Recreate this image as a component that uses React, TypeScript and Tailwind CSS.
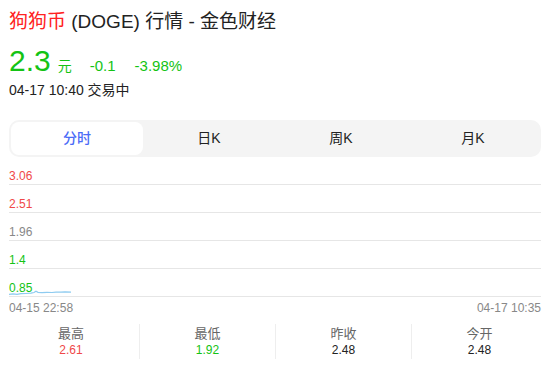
const font = { fontFamily: '"Liberation Sans", Arial, "Noto Sans CJK SC", sans-serif' };

const levels = [
  { v: "3.06", c: "text-[#f04848]" },
  { v: "2.51", c: "text-[#f04848]" },
  { v: "1.96", c: "text-[#888888]" },
  { v: "1.4", c: "text-[#14c314]" },
  { v: "0.85", c: "text-[#14c314]" },
];

const stats = [
  { label: "最高", value: "2.61", c: "text-[#f04848]" },
  { label: "最低", value: "1.92", c: "text-[#14c314]" },
  { label: "昨收", value: "2.48", c: "text-[#222222]" },
  { label: "今开", value: "2.48", c: "text-[#222222]" },
];

function Spark() {
  return (
    <svg className="absolute left-0 bottom-0" width="63" height="7" viewBox="0 0 63 7">
      <path
        d="M0 5.3 L4 4.9 L8 5.4 L12 4.7 L17 4.5 L22 4.2 L25 3.5 L27 2.3 L29 3.3 L33 3.7 L38 3.4 L43 3.5 L47 3.1 L52 3.2 L56 2.9 L62 3.1"
        fill="none"
        stroke="#8ecbf0"
        strokeWidth="1.2"
      />
    </svg>
  );
}

export default function App() {
  return (
    <div className="w-[550px] h-[371px] overflow-hidden bg-white text-[#222222]" style={font}>
      <div className="px-[9px] pt-[10px]">
        <h1 className="text-[19px] leading-[24px] font-normal">
          <span className="text-[#ff2222]">狗狗币</span> (DOGE) 行情 - 金色财经
        </h1>
        <div className="mt-[10px] flex items-baseline text-[#14c314]">
          <span className="text-[30px] leading-[34px]">2.3</span>
          <span className="ml-[7px] text-[14px]">元</span>
          <span className="ml-[18px] text-[15px]">-0.1</span>
          <span className="ml-[19px] text-[15px]">-3.98%</span>
        </div>
        <div className="mt-[3px] text-[14px] leading-[18px]">04-17 10:40 交易中</div>

        <div className="mt-[21px] grid grid-cols-4 rounded-[10px] bg-[#f4f4f4] p-[2px] text-[14px]">
          <div className="flex h-[33px] items-center justify-center rounded-[8px] bg-white font-medium text-[#4b6cf7]">
            分时
          </div>
          <div className="flex h-[33px] items-center justify-center">日K</div>
          <div className="flex h-[33px] items-center justify-center">周K</div>
          <div className="flex h-[33px] items-center justify-center">月K</div>
        </div>

        <div>
          {levels.map((l, i) => (
            <div
              key={l.v}
              className="relative flex h-[28px] items-end border-b border-[#e6e6e6] pb-[1px]"
            >
              <span className={`text-[12px] leading-[14px] ${l.c}`}>{l.v}</span>
              {i === levels.length - 1 && <Spark />}
            </div>
          ))}
        </div>

        <div className="mt-[4px] flex justify-between text-[12px] leading-[14px] text-[#888888]">
          <span>04-15 22:58</span>
          <span>04-17 10:35</span>
        </div>
      </div>

      <div className="mt-[9px] grid grid-cols-4 px-[3px]">
        {stats.map((s, i) => (
          <div
            key={s.label}
            className={`flex flex-col items-center pt-[1px] pb-[1px] ${i > 0 ? "border-l border-[#eeeeee]" : ""}`}
          >
            <span className="text-[13px] leading-[17px] text-[#666666]">{s.label}</span>
            <span className={`text-[12px] leading-[16px] ${s.c}`}>{s.value}</span>
          </div>
        ))}
      </div>
    </div>
  );
}
